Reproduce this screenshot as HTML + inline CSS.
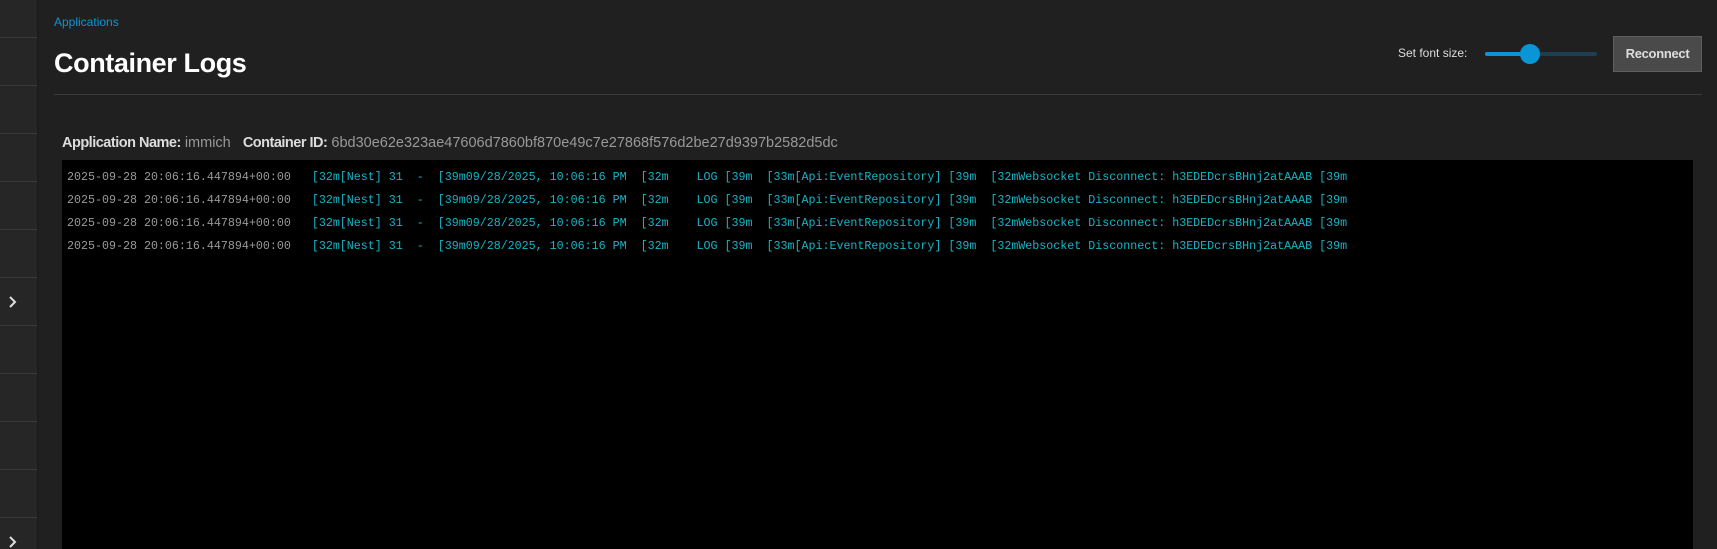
<!DOCTYPE html>
<html><head><meta charset="utf-8"><style>
*{margin:0;padding:0;box-sizing:border-box}
body{width:1717px;height:549px;background:#202020;overflow:hidden;position:relative;font-family:"Liberation Sans",sans-serif}
.side{position:absolute;left:0;top:0;width:37px;height:549px;background:#262626}
.strip{position:absolute;left:37px;top:0;width:2px;height:549px;background:#1c1c1c}
.side i{position:absolute;left:0;width:37px;height:1px;background:#3a3a3a}
.chev{position:absolute;left:8px;width:10px;height:14px}
.crumb{position:absolute;left:54px;top:15px;font-size:12px;color:#0a95d6}
h1{position:absolute;left:54px;top:48px;font-size:27px;font-weight:bold;color:#fff;letter-spacing:-0.4px}
.hr{position:absolute;left:54px;top:94px;width:1648px;height:1px;background:#3a3a3a}
.fs{position:absolute;left:1398px;top:46px;font-size:12px;color:#ddd}
.track{position:absolute;left:1485px;top:52px;width:112px;height:4px;border-radius:2px;background:#1d3f52}
.fill{position:absolute;left:1485px;top:52px;width:45px;height:4px;border-radius:2px;background:#0a95d6}
.thumb{position:absolute;left:1520px;top:44px;width:20px;height:20px;border-radius:50%;background:#0a95d6}
.btn{position:absolute;left:1613px;top:36px;width:89px;height:36px;background:#4a4a4a;border:1px solid #5e5e5e;color:#ddd;font-weight:bold;font-size:13px;text-align:center;line-height:34px;letter-spacing:-0.3px}
.meta{position:absolute;left:62px;top:135px;font-size:14.5px;color:#999;white-space:pre}
.meta b{color:#ddd;letter-spacing:-0.5px}
.box{position:absolute;left:62px;top:160px;width:1631px;height:389px;background:#000}
pre{position:absolute;left:67px;top:166px;font-family:"Liberation Mono",monospace;font-size:11.67px;line-height:23px;color:#17b4c6}
pre span{color:#9a9a9a}
</style></head><body>
<div class="side">
<i style="top:37px"></i><i style="top:85px"></i><i style="top:133px"></i><i style="top:181px"></i><i style="top:229px"></i><i style="top:277px"></i><i style="top:325px"></i><i style="top:373px"></i><i style="top:421px"></i><i style="top:469px"></i><i style="top:517px"></i>
<svg class="chev" style="top:295px" viewBox="0 0 10 14"><path d="M2 2l5 5-5 5" stroke="#ddd" stroke-width="2" fill="none"/></svg>
<svg class="chev" style="top:535px" viewBox="0 0 10 14"><path d="M2 2l5 5-5 5" stroke="#ddd" stroke-width="2" fill="none"/></svg>
</div>
<div class="strip"></div>
<div class="crumb">Applications</div>
<h1>Container Logs</h1>
<div class="fs">Set font size:</div>
<div class="track"></div><div class="fill"></div><div class="thumb"></div>
<div class="btn">Reconnect</div>
<div class="hr"></div>
<div class="meta"><b>Application Name:</b> immich   <b>Container ID:</b> 6bd30e62e323ae47606d7860bf870e49c7e27868f576d2be27d9397b2582d5dc</div>
<div class="box"></div>
<pre><span>2025-09-28 20:06:16.447894+00:00</span>   [32m[Nest] 31  -  [39m09/28/2025, 10:06:16 PM  [32m    LOG [39m  [33m[Api:EventRepository] [39m  [32mWebsocket Disconnect: h3EDEDcrsBHnj2atAAAB [39m
<span>2025-09-28 20:06:16.447894+00:00</span>   [32m[Nest] 31  -  [39m09/28/2025, 10:06:16 PM  [32m    LOG [39m  [33m[Api:EventRepository] [39m  [32mWebsocket Disconnect: h3EDEDcrsBHnj2atAAAB [39m
<span>2025-09-28 20:06:16.447894+00:00</span>   [32m[Nest] 31  -  [39m09/28/2025, 10:06:16 PM  [32m    LOG [39m  [33m[Api:EventRepository] [39m  [32mWebsocket Disconnect: h3EDEDcrsBHnj2atAAAB [39m
<span>2025-09-28 20:06:16.447894+00:00</span>   [32m[Nest] 31  -  [39m09/28/2025, 10:06:16 PM  [32m    LOG [39m  [33m[Api:EventRepository] [39m  [32mWebsocket Disconnect: h3EDEDcrsBHnj2atAAAB [39m</pre>
</body></html>
